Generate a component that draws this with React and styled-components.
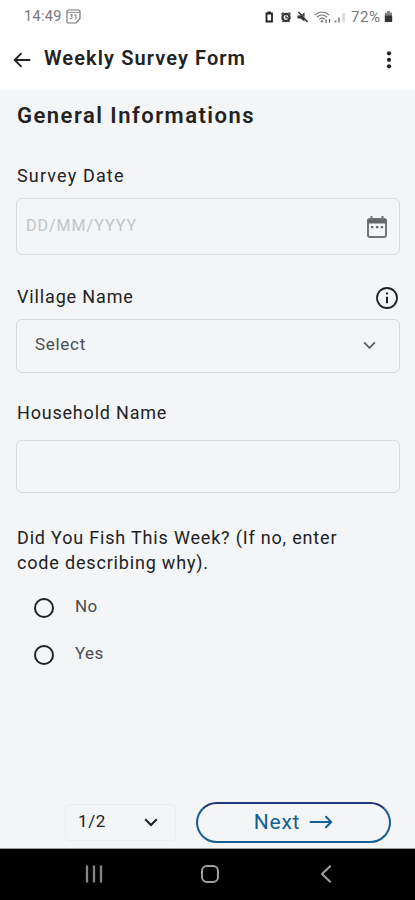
import React, { useState } from "react";
import styled, { createGlobalStyle } from "styled-components";

const GlobalStyle = createGlobalStyle`
  * {
    box-sizing: border-box;
  }

  body {
    margin: 0;
    background: #f3f5f7;
    font-family: Roboto, "Liberation Sans", sans-serif;
  }
`;

const options = ["No", "Yes"];

function StatusBar() {
  return (
    <Status>
      <Clock>14:49</Clock>
      <svg width="15" height="15" viewBox="0 0 15 15" fill="none" stroke="#777" strokeWidth="1.2">
        <path d="M2.5 1h10a1.5 1.5 0 0 1 1.5 1.5v7L10 14H2.5A1.5 1.5 0 0 1 1 12.5v-10A1.5 1.5 0 0 1 2.5 1z" />
        <path d="M1 3.4h13" strokeWidth="0.8" />
        <path d="M4 5.8h2.5L5.2 7.4c2 0 1.6 2.6-1.2 2.2M8.4 6.3l1.5-.6v4.5" strokeWidth="1" />
      </svg>
      <StatusIcons>
        <svg width="128" height="14" viewBox="264 9 128 14">
          <path d="M266.5 12.5h5.500v8h-5.500z" fill="none" stroke="#222" strokeWidth="1.8" />
          <path d="M267.5 10.5h3.500v2h-3.500z" fill="#222" />
          <circle cx="286" cy="16.5" r="3.6" fill="none" stroke="#333" strokeWidth="2.3" />
          <path d="M281.5 13.5l2-2M290.5 13.5l-2-2M282.5 21l1.500-1.500M289.5 21l-1.500-1.500M286 14.5v2.300h2" fill="none" stroke="#333" strokeWidth="1.3" />
          <path d="M297.5 14.5h3l4-3v9l-4-3h-3z" fill="#333" />
          <path d="M299.5 11l9 10" stroke="#fff" strokeWidth="1" />
          <path d="M298.5 11l9 10" stroke="#333" strokeWidth="1.5" />
          <path d="M315 14c4-4 10-4 14 0M317 16.2c3-2.800 7-2.800 10 0M319.3 18.3c1.700-1.500 3.700-1.500 5.400 0" fill="none" stroke="#777" strokeWidth="1.2" />
          <path d="M322 18.5l1.600 2-1.600 1-1.600-1z" fill="#777" />
          <path d="M326 18.5v3.500M329.5 18v3.500" stroke="#666" strokeWidth="1.3" />
          <path d="M334.5 19.5h2v2h-2z" fill="#888" />
          <path d="M338 16.5h2v5h-2z" fill="#999" />
          <path d="M342 12h3v9.500h-3z" fill="#dedede" />
        </svg>
      </StatusIcons>
      <Percent>72%</Percent>
      <svg width="9" height="13" viewBox="0 0 9 13">
        <path d="M3 1h3v1.500h2v4H1v-4h2z" fill="#888" />
        <path d="M.8 5.500h7.400V12H.8z" fill="#333" />
      </svg>
    </Status>
  );
}

function Chevron({ size = 14, color }) {
  return (
    <svg width={size} height="9" viewBox="0 0 14 9" fill="none" stroke={color} strokeWidth="2">
      <path d="M1.2 1.2L7 7l5.800-5.800" />
    </svg>
  );
}

function App() {
  const [answer, setAnswer] = useState(null);

  return (
    <Screen>
      <GlobalStyle />
      <StatusBar />
      <Header>
        <svg width="18" height="16" viewBox="0 0 18 16" fill="none" stroke="#222" strokeWidth="1.9">
          <path d="M17.3 8H2M8.5 1.2L1.700 8l6.800 6.800" />
        </svg>
        <Title>Weekly Survey Form</Title>
        <svg width="6" height="20" viewBox="0 0 6 20" fill="#222">
          <circle cx="3" cy="3.3" r="2.1" />
          <circle cx="3" cy="9.8" r="2.1" />
          <circle cx="3" cy="16.3" r="2.1" />
        </svg>
      </Header>

      <Form>
        <Heading>General Informations</Heading>

        <Field $top="36px">
          <Label $spacing="1.15px">Survey Date</Label>
          <Box $height="57px" $pad="0 11px 0 9px">
            <Placeholder>DD/MM/YYYY</Placeholder>
            <svg width="22" height="24" viewBox="0 0 22 24">
              <rect x="2" y="4" width="18" height="18" rx="2" fill="none" stroke="#73757a" strokeWidth="2" />
              <path d="M1.5 4h19v4.500h-19z" fill="#66686c" />
              <path d="M5.5 1v4M16.5 1v4" stroke="#73757a" strokeWidth="2" />
              <path d="M5 11h2.300v2.200H5zM9.9 11h2.300v2.200H9.900zM14.8 11h2.300v2.200h-2.300z" fill="#66686c" />
            </svg>
          </Box>
        </Field>

        <Field $top="30px">
          <LabelRow>
            <Label $spacing="0.85px">Village Name</Label>
            <svg width="24" height="24" viewBox="0 0 24 24">
              <circle cx="12" cy="12" r="10" fill="none" stroke="#222" strokeWidth="1.8" />
              <path d="M11 6.5h2v2h-2zM11 10.8h2v6.500h-2z" fill="#222" />
            </svg>
          </LabelRow>
          <Box $height="54px" $pad="0 23px 3px 18px">
            <Value>Select</Value>
            <SelectArrow>
              <Chevron size={13} color="#606267" />
            </SelectArrow>
          </Box>
        </Field>

        <Field $top="28px">
          <Label $spacing="0.8px" $height="39px">Household Name</Label>
          <Box $height="53px" $pad="0 18px" />
        </Field>

        <Question>
          Did You Fish This Week? (If no, enter
          <br />
          code describing why).
        </Question>
        <Choices>
          {options.map((option) => (
            <Choice key={option} onClick={() => setAnswer(option)}>
              <Radio $checked={answer === option} />
              <ChoiceText>{option}</ChoiceText>
            </Choice>
          ))}
        </Choices>
      </Form>

      <Footer>
        <Pager>
          <span>1/2</span>
          <Chevron color="#222" />
        </Pager>
        <NextButton>
          Next
          <svg width="24" height="14" viewBox="0 0 24 14" fill="none" stroke="#155e91" strokeWidth="2" strokeLinecap="round" strokeLinejoin="round">
            <path d="M1.500 7h20.500M17 1.800L22.200 7 17 12.200" />
          </svg>
        </NextButton>
      </Footer>

      <NavBar>
        <svg width="18" height="18" viewBox="0 0 18 18" stroke="#858585" strokeWidth="2.3">
          <path d="M2 .5v17M9 .5v17M16 .5v17" />
        </svg>
        <HomeIcon width="18" height="18" viewBox="0 0 18 18" fill="none" stroke="#a0a0a0" strokeWidth="2">
          <rect x="1" y="1" width="16" height="16" rx="5" />
        </HomeIcon>
        <svg width="12" height="18" viewBox="0 0 12 18" fill="none" stroke="#a0a0a0" strokeWidth="2">
          <path d="M10.7 .8L2 9l8.700 8.200" />
        </svg>
      </NavBar>
    </Screen>
  );
}

const Screen = styled.div`
  display: flex;
  flex-direction: column;
  width: 415px;
  height: 900px;
  background: #f3f5f7;
  color: #222;
  overflow: hidden;
`;

const Status = styled.div`
  display: flex;
  align-items: center;
  height: 33px;
  padding: 0 22px 0 24px;
  background: #fff;
  color: #777;
`;

const Clock = styled.span`
  width: 42px;
  font-size: 14.5px;
  letter-spacing: 0.3px;
  white-space: nowrap;
`;

const StatusIcons = styled.div`
  display: flex;
  margin-left: auto;
  width: 87px;
  overflow: hidden;

  svg {
    flex: none;
  }
`;

const Percent = styled.span`
  width: 33px;
  font-size: 15px;
  letter-spacing: 0.6px;
`;

const Header = styled.header`
  display: flex;
  align-items: center;
  height: 57px;
  padding: 0 23px 4px 13px;
  background: #fff;
`;

const Title = styled.h1`
  flex: 1;
  margin: 0 0 3px 13px;
  font-size: 20px;
  font-weight: 600;
  line-height: 26px;
  letter-spacing: 1.1px;
`;

const Form = styled.main`
  flex: 1;
  padding: 14px 15.5px 0 16px;
`;

const Heading = styled.h2`
  margin: 0 0 0 1px;
  font-size: 22px;
  font-weight: 600;
  line-height: 24px;
  letter-spacing: 1.48px;
`;

const Field = styled.div`
  margin-top: ${(props) => props.$top};
`;

const Label = styled.label`
  display: block;
  margin-left: 1px;
  height: ${(props) => props.$height || "34px"};
  font-size: 18px;
  line-height: 24px;
  letter-spacing: ${(props) => props.$spacing};
`;

const LabelRow = styled.div`
  display: flex;
  justify-content: space-between;
  padding-right: 1px;

  svg {
    margin-top: 1px;
  }
`;

const Box = styled.div`
  display: flex;
  align-items: center;
  justify-content: space-between;
  height: ${(props) => props.$height};
  padding: ${(props) => props.$pad};
  border: 1px solid #d9dadd;
  border-radius: 6px;
`;

const Placeholder = styled.span`
  margin-bottom: 2px;
  color: #c2c4c8;
  font-size: 16px;
  letter-spacing: 1px;
`;

const Value = styled.span`
  margin-bottom: 1px;
  color: #4b4d51;
  font-size: 17px;
  letter-spacing: 0.7px;
`;

const SelectArrow = styled.span`
  display: flex;
  padding-top: 2px;
`;

const Question = styled.p`
  margin: 32px 0 0 1px;
  font-size: 18px;
  line-height: 25px;
  letter-spacing: 0.82px;
  white-space: nowrap;
`;

const Choices = styled.div`
  display: flex;
  flex-direction: column;
  padding: 10px 0 0 18px;
`;

const Choice = styled.div`
  display: flex;
  align-items: center;
  height: 46.5px;
  cursor: pointer;
`;

const Radio = styled.span`
  width: 20px;
  height: 20px;
  border: 2px solid #222;
  border-radius: 50%;
  background: ${(props) => (props.$checked ? "#155e91" : "transparent")};
`;

const ChoiceText = styled.span`
  margin: 0 0 4px 21px;
  color: #4b4d51;
  font-size: 17px;
  letter-spacing: 0.4px;
`;

const Footer = styled.footer`
  display: flex;
  align-items: center;
  justify-content: flex-end;
  gap: 20px;
  height: 46px;
  padding: 0 24px 5px 0;
`;

const Pager = styled.div`
  display: flex;
  align-items: center;
  justify-content: space-between;
  width: 111px;
  height: 37px;
  padding: 0 17px 0 12px;
  border: 1px solid #ebedef;
  border-radius: 4px;
  font-size: 17px;
  letter-spacing: 0.6px;

  span {
    margin-bottom: 3px;
  }
`;

const NextButton = styled.button`
  display: flex;
  align-items: center;
  justify-content: center;
  gap: 9px;
  width: 195px;
  height: 41px;
  padding: 0 0 2px;
  border: 2px solid #155e91;
  border-top-color: #20367f;
  border-radius: 21px;
  background: transparent;
  color: #155e91;
  font-family: inherit;
  font-size: 21px;
  letter-spacing: 0.8px;
`;

const NavBar = styled.nav`
  display: flex;
  align-items: center;
  height: 52px;
  padding: 0 0 2px 85px;
  border-top: 1px solid #999;
  background: #000;
`;

const HomeIcon = styled.svg`
  margin: 0 101px 0 98px;
`;

export default App;
